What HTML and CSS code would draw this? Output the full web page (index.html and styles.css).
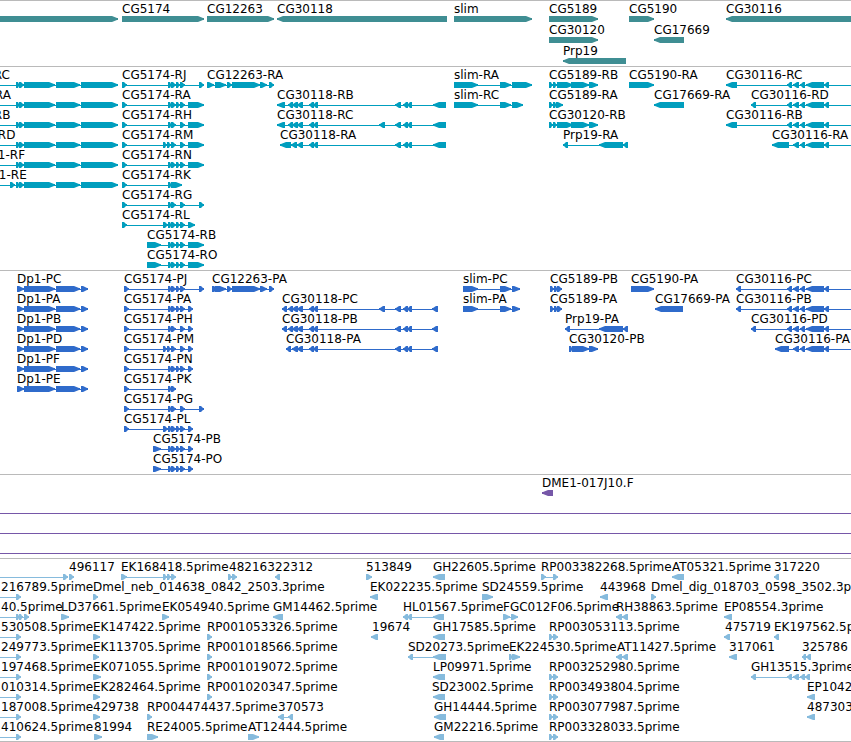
FILE: index.html
```html
<!DOCTYPE html>
<html lang="en">
<head>
  <meta charset="UTF-8">
  <meta name="viewport" content="width=device-width, initial-scale=1.0">
  <title>Genome Browser</title>
  <link rel="stylesheet" href="styles.css">
</head>
<body>

  <main class="browser">
      <section class="track genes" id="genes" aria-label="Genes"></section>
      <section class="track transcripts" id="transcripts" aria-label="Transcripts"></section>
      <section class="track proteins" id="proteins" aria-label="Proteins"></section>
      <section class="track clones" id="clones" aria-label="Clones"></section>
      <section class="track ests" id="ests" aria-label="ESTs"></section>
  </main>

  <script src="tracks.js"></script>
</body>
</html>
```
FILE: styles.css
```css
body {
  margin: 0;
  background-color: #fff;
  font-family: "DejaVu Sans", sans-serif;
  font-size: 12px;
}

.track {
  border-top: 1px solid #bababa;
  padding: 1px 0 2px;
}

.row {
  display: block;
  width: 100%;
  height: 20px;
}

.row text {
  fill: #000;
}

.row line {
  shape-rendering: crispEdges;
}

.genes {
  color: #3f8e93;
  padding-bottom: 1px;
}

.genes .row {
  height: 21px;
}

.transcripts {
  color: #009ebe;
}

.proteins {
  color: #2f6bcb;
}

.clones {
  color: #7657a8;
}

.ests {
  color: #86bbdd;
  border-bottom: 1px solid #bababa;
  padding-bottom: 1px;
}

.exon {
  fill: currentColor;
}

.intron {
  stroke: currentColor;
  stroke-width: 1px;
}
```
FILE: tracks.js
```js
// feature: [label, label x, direction, exons as "start-end start-end ..."]
const FWD = 1;
const REV = -1;

// exon groups shared between isoforms
const dp1 = "24-55 56-80 81-";
const four = "168-172 171-176 176-180 180-185";
const cg30118mid = "309-314 313-318";
const cg30118end = "395-401 403-408 407-412";
const cg30118start = "288-293 292-298 297-303";
const cg30116end = "793-799 800-805 806-824 824-829 880-890";

const tracks = {
  genes: [
    [
      ["", 0, FWD, "-40-118"],
      ["CG5174", 122, FWD, "122-204"],
      ["CG12263", 207, FWD, "207-274"],
      ["CG30118", 277, REV, "277-447"],
      ["slim", 454, FWD, "454-532"],
      ["CG5189", 549, FWD, "549-598"],
      ["CG5190", 629, FWD, "629-654"],
      ["CG30116", 726, REV, "726-2000"]
    ],
    [
      ["CG30120", 549, FWD, "549-598"],
      ["CG17669", 654, REV, "654-684"]
    ],
    [
      ["Prp19", 563, REV, "563-626"]
    ]
  ],

  transcripts: [
    [
      ["Dp1-RC", -35, FWD, "-40--30 16-20 19-24 " + dp1 + "118"],
      ["CG5174-RJ", 122, FWD, "122-127 " + four + " 199-204"],
      ["CG12263-RA", 207, FWD, "207-214 215-226 227-232 232-260 260-267 269-274"],
      ["slim-RA", 454, FWD, "454-478 500-511 512-532"],
      ["CG5189-RB", 549, FWD, "549-553 553-557 557-573 571-589 589-598"],
      ["CG5190-RA", 629, FWD, "629-654"],
      ["CG30116-RC", 726, REV, "726-737 787-792 " + cg30116end]
    ],
    [
      ["Dp1-RA", -34, FWD, "-40--30 16-20 19-24 " + dp1 + "118"],
      ["CG5174-RA", 122, FWD, "122-127 " + four + " 188-204"],
      ["CG30118-RB", 277, REV, "277-285 " + cg30118start + " " + cg30118mid + " " + cg30118end + " 433-446"],
      ["slim-RC", 454, FWD, "454-478 500-511 512-523"],
      ["CG5189-RA", 549, FWD, "549-553 553-557 556-563"],
      ["CG17669-RA", 654, REV, "654-684"],
      ["CG30116-RD", 751, REV, "751-756 787-792 " + cg30116end]
    ],
    [
      ["Dp1-RB", -35, FWD, "-40--30 16-20 19-24 " + dp1 + "118"],
      ["CG5174-RH", 122, FWD, "122-127 168-172 171-176 180-185 188-204"],
      ["CG30118-RC", 277, REV, "277-285 " + cg30118start + " " + cg30118mid + " 379-385 " + cg30118end + " 433-446"],
      ["CG30120-RB", 549, FWD, "549-553 553-557 557-573 571-589 589-598"],
      ["CG30116-RB", 726, REV, "726-737 787-792 " + cg30116end]
    ],
    [
      ["Dp1-RD", -31, FWD, "-40--30 16-20 19-24 " + dp1 + "118"],
      ["CG5174-RM", 122, FWD, "122-127 163-167 167-171 171-176 180-185 188-204"],
      ["CG30118-RA", 280, REV, "280-291 291-297 297-303 " + cg30118mid + " " + cg30118end + " 433-446"],
      ["Prp19-RA", 563, REV, "563-568 599-623 623-628"],
      ["CG30116-RA", 772, REV, "772-789 " + cg30116end]
    ],
    [
      ["Dp1-RF", -19, FWD, "-40--30 16-20 19-24 " + dp1 + "118"],
      ["CG5174-RN", 122, FWD, "122-127 " + four + " 188-204"]
    ],
    [
      ["Dp1-RE", -18, FWD, "-40--30 10-15 16-20 19-24 " + dp1 + "118"],
      ["CG5174-RK", 122, FWD, "122-127 168-172 171-182"]
    ],
    [
      ["CG5174-RG", 122, FWD, "122-127 168-172 171-176 180-185 199-204"]
    ],
    [
      ["CG5174-RL", 122, FWD, "122-127 163-168 " + four + " 188-195"]
    ],
    [
      ["CG5174-RB", 147, FWD, "147-161 " + four + " 188-204"]
    ],
    [
      ["CG5174-RO", 147, FWD, "147-161 " + four + " 188-204"]
    ]
  ],

  proteins: [
    [
      ["Dp1-PC", 17, FWD, "17-24 " + dp1 + "88"],
      ["CG5174-PJ", 124, FWD, "124-129 " + four + " 199-204"],
      ["CG12263-PA", 212, FWD, "212-218 215-226 227-232 232-260 260-267 269-274"],
      ["slim-PC", 463, FWD, "463-478 500-511 512-520"],
      ["CG5189-PB", 550, FWD, "550-554 554-558 557-562"],
      ["CG5190-PA", 631, FWD, "631-654"],
      ["CG30116-PC", 736, REV, "736-741 787-792 " + cg30116end]
    ],
    [
      ["Dp1-PA", 17, FWD, "17-24 " + dp1 + "88"],
      ["CG5174-PA", 124, FWD, "124-129 " + four + " 188-193"],
      ["CG30118-PC", 282, REV, "282-287 " + cg30118start + " " + cg30118mid + " 379-385 " + cg30118end + " 432-438"],
      ["slim-PA", 463, FWD, "463-478 500-511 512-520"],
      ["CG5189-PA", 550, FWD, "550-554 554-558 557-562"],
      ["CG17669-PA", 655, REV, "655-683"],
      ["CG30116-PB", 736, REV, "736-741 787-792 " + cg30116end]
    ],
    [
      ["Dp1-PB", 17, FWD, "17-24 " + dp1 + "88"],
      ["CG5174-PH", 124, FWD, "124-129 168-172 171-176 180-185 188-193"],
      ["CG30118-PB", 282, REV, "282-287 " + cg30118start + " " + cg30118mid + " " + cg30118end + " 432-438"],
      ["Prp19-PA", 565, REV, "565-570 599-623 623-628"],
      ["CG30116-PD", 751, REV, "751-756 787-792 " + cg30116end]
    ],
    [
      ["Dp1-PD", 17, FWD, "17-24 " + dp1 + "88"],
      ["CG5174-PM", 124, FWD, "124-129 163-167 167-171 171-176 180-185 188-193"],
      ["CG30118-PA", 286, REV, "286-291 292-298 297-303 " + cg30118mid + " " + cg30118end + " 432-438"],
      ["CG30120-PB", 569, FWD, "569-573 572-589 589-598"],
      ["CG30116-PA", 775, REV, "775-789 " + cg30116end]
    ],
    [
      ["Dp1-PF", 17, FWD, "17-24 " + dp1 + "88"],
      ["CG5174-PN", 124, FWD, "124-129 " + four + " 188-193"]
    ],
    [
      ["Dp1-PE", 17, FWD, "17-24 " + dp1 + "88"],
      ["CG5174-PK", 124, FWD, "124-129 168-172 171-176"]
    ],
    [
      ["CG5174-PG", 124, FWD, "124-129 168-172 171-176 180-185 199-204"]
    ],
    [
      ["CG5174-PL", 124, FWD, "124-129 163-168 " + four + " 188-193"]
    ],
    [
      ["CG5174-PB", 153, FWD, "153-161 " + four + " 188-193"]
    ],
    [
      ["CG5174-PO", 153, FWD, "153-161 " + four + " 188-193"]
    ]
  ],

  // rows without features are clones that span the whole region
  clones: [
    [
      ["DME1-017J10.F", 542, REV, "542-553"]
    ],
    [],
    [],
    []
  ],

  ests: [
    [
      ["", 0, FWD, "-40--30 63-68"],
      ["496117", 69, FWD, "69-74"],
      ["EK168418.5prime", 121, FWD, "121-127 163-167 167-171 171-176"],
      ["482163", 229, FWD, "228-232 232-237"],
      ["22312", 275, REV, "275-280"],
      ["513849", 366, FWD, "366-372"],
      ["GH22605.5prime", 433, REV, "433-445"],
      ["RP003382268.5prime", 541, FWD, "541-546 553-558"],
      ["AT05321.5prime", 672, REV, "672-684"],
      ["317220", 774, REV, "774-779"]
    ],
    [
      ["216789.5prime", 1, FWD, "-40--30 16-21"],
      ["Dmel_neb_014638_0842_2503.3prime", 93, FWD, "93-98"],
      ["EK022235.5prime", 370, REV, "370-378"],
      ["SD24559.5prime", 482, FWD, "482-493"],
      ["443968", 600, REV, "600-608"],
      ["Dmel_dig_018703_0598_3502.3prime", 651, FWD, "651-656"]
    ],
    [
      ["40.5prime", 1, FWD, "-40--30 16-20 19-23 24-29"],
      ["LD37661.5prime", 61, FWD, "61-69"],
      ["EK054940.5prime", 162, FWD, "162-169"],
      ["GM14462.5prime", 273, REV, "273-283"],
      ["HL01567.5prime", 403, REV, "403-408 407-412 433-444"],
      ["FGC012F06.5prime", 503, FWD, "503-510 511-518"],
      ["RH38863.5prime", 616, REV, "616-622 622-628"],
      ["EP08554.3prime", 724, REV, "724-732"]
    ],
    [
      ["530508.5prime", 1, FWD, "-40--30 16-21"],
      ["EK147422.5prime", 93, FWD, "93-100"],
      ["RP001053326.5prime", 207, FWD, "207-212"],
      ["19674", 372, REV, "371-378"],
      ["GH17585.5prime", 433, REV, "433-445"],
      ["RP003053113.5prime", 549, FWD, "549-553 553-558"],
      ["475719", 725, REV, "724-730"],
      ["EK197562.5prime", 774, REV, "774-779"]
    ],
    [
      ["249773.5prime", 1, FWD, "-40--30 16-21"],
      ["EK113705.5prime", 93, FWD, "93-99"],
      ["RP001018566.5prime", 207, FWD, "207-212"],
      ["SD20273.5prime", 408, REV, "408-413 433-446"],
      ["EK224530.5prime", 509, FWD, "509-513 512-520"],
      ["AT11427.5prime", 617, REV, "616-622 622-628"],
      ["317061", 729, REV, "729-737"],
      ["325786", 802, REV, "802-806 806-811"]
    ],
    [
      ["197468.5prime", 1, FWD, "-40--30 16-21"],
      ["EK071055.5prime", 93, FWD, "93-101"],
      ["RP001019072.5prime", 207, FWD, "207-212"],
      ["LP09971.5prime", 433, REV, "433-445"],
      ["RP003252980.5prime", 549, FWD, "549-553 553-558"],
      ["GH13515.3prime", 751, REV, "751-756 787-792 793-799 800-805 805-810"]
    ],
    [
      ["010314.5prime", 1, FWD, "-40--30 16-21"],
      ["EK282464.5prime", 93, FWD, "93-100"],
      ["RP001020347.5prime", 207, FWD, "207-212"],
      ["SD23002.5prime", 432, REV, "433-445"],
      ["RP003493804.5prime", 549, FWD, "549-553 553-558"],
      ["EP1042", 807, REV, "807-815"]
    ],
    [
      ["187008.5prime", 1, FWD, "-40--30 16-21"],
      ["429738", 93, FWD, "93-100"],
      ["RP004474437.5prime", 147, FWD, "147-152"],
      ["370573", 278, REV, "278-284 288-293"],
      ["GH14444.5prime", 434, REV, "434-446"],
      ["RP003077987.5prime", 549, FWD, "549-553 553-558"],
      ["487303", 807, REV, "807-815"]
    ],
    [
      ["410624.5prime", 1, FWD, "-40--30 16-21"],
      ["81994", 94, FWD, "94-102"],
      ["RE24005.5prime", 147, FWD, "147-158"],
      ["AT12444.5prime", 248, FWD, "248-259"],
      ["GM22216.5prime", 434, REV, "434-444"],
      ["RP003328033.5prime", 549, FWD, "549-553 553-558"]
    ]
  ]
};

const TOP = 14;
const BOTTOM = 20;

function parseExons(text) {
  return text.split(" ").map(function (part) {
    const m = part.match(/^(-?\d+)-(-?\d+)$/);
    return [Number(m[1]), Number(m[2])];
  });
}

// a box that narrows to a blunt point on the side it is read towards
function exonPath(start, end, dir) {
  const width = end - start;
  const head = width > 8 ? 6 : width - 2;
  const tip = dir === FWD ? end : start;
  const back = dir === FWD ? start : end;
  const neck = tip - dir * head;
  const shoulder = tip - dir;
  return `M${back} ${TOP}H${neck}L${shoulder} ${TOP + 2}H${tip}V${BOTTOM - 2}H${shoulder}L${neck} ${BOTTOM}H${back}Z`;
}

function drawFeature(feature) {
  const [label, x, dir, exonText] = feature;
  const exons = parseExons(exonText);
  const first = exons[0][0];
  const last = exons[exons.length - 1][1];
  let out = "";
  if (exons.length > 1) {
    out += `<line class="intron" x1="${first}" x2="${last}" y1="17.5" y2="17.5"/>`;
  }
  out += `<path class="exon" d="${exons.map(e => exonPath(e[0], e[1], dir)).join("")}"/>`;
  if (label) {
    out += `<text x="${x}" y="11">${label}</text>`;
  }
  return out;
}

function drawRow(row) {
  const body = row.length
    ? row.map(drawFeature).join("")
    : `<line class="intron" x1="0" x2="100%" y1="17.5" y2="17.5"/>`;
  return `<svg class="row">${body}</svg>`;
}

for (const id in tracks) {
  document.getElementById(id).innerHTML = tracks[id].map(drawRow).join("");
}
```
